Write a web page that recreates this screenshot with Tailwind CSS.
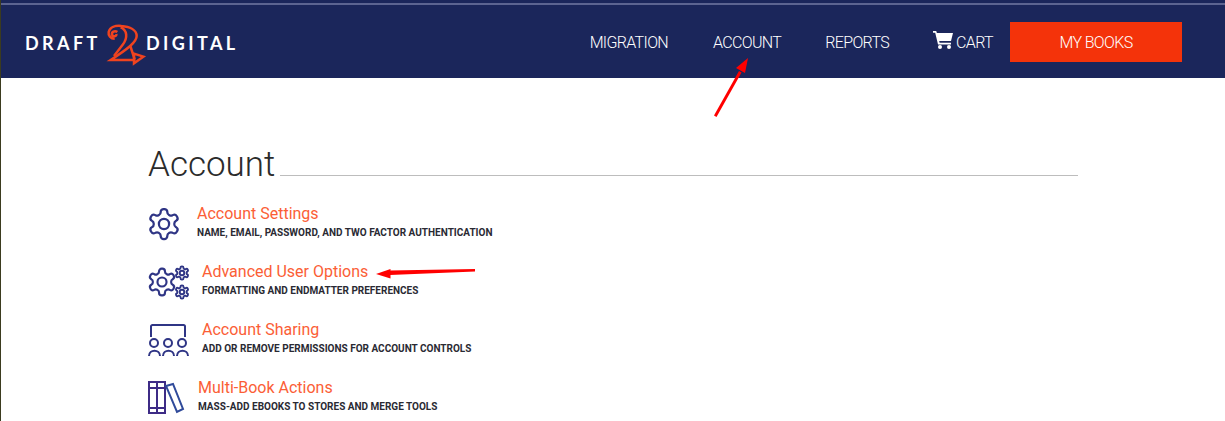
<!DOCTYPE html>
<html lang="en">
  <head>
    <meta charset="utf-8" />
    <meta name="viewport" content="width=device-width, initial-scale=1" />
    <title>Account</title>
    <script src="https://cdn.jsdelivr.net/npm/@tailwindcss/browser@4"></script>
  </head>
  <body class="bg-white font-['Roboto',sans-serif] overflow-hidden">
    <svg class="hidden">
      <symbol id="gear" viewBox="0 0 24 24">
        <path d="M12.22 2h-.44a2 2 0 0 0-2 2v.18a2 2 0 0 1-1 1.73l-.43.25a2 2 0 0 1-2 0l-.15-.08a2 2 0 0 0-2.73.73l-.22.38a2 2 0 0 0 .73 2.73l.15.1a2 2 0 0 1 1 1.72v.51a2 2 0 0 1-1 1.74l-.15.09a2 2 0 0 0-.73 2.73l.22.38a2 2 0 0 0 2.73.73l.15-.08a2 2 0 0 1 2 0l.43.25a2 2 0 0 1 1 1.73V20a2 2 0 0 0 2 2h.44a2 2 0 0 0 2-2v-.18a2 2 0 0 1 1-1.73l.43-.25a2 2 0 0 1 2 0l.15.08a2 2 0 0 0 2.73-.73l.22-.39a2 2 0 0 0-.73-2.73l-.15-.08a2 2 0 0 1-1-1.74v-.5a2 2 0 0 1 1-1.74l.15-.09a2 2 0 0 0 .73-2.73l-.22-.38a2 2 0 0 0-2.73-.73l-.15.08a2 2 0 0 1-2 0l-.43-.25a2 2 0 0 1-1-1.73V4a2 2 0 0 0-2-2z" fill="none" stroke="#2f3585" />
        <circle cx="12" cy="12" r="3.4" fill="none" stroke="#2f3585" />
      </symbol>
    </svg>

    <div class="relative h-[421px] border-l border-[#3b3b1f]">
      <header class="h-[78px] bg-[#1b265b] pt-[3px]">
        <div class="h-[2px] bg-[#5c6491]"></div>
        <div class="flex items-center h-[73px]">
          <div class="flex items-center ml-[24px]">
            <span class="font-['Lato',sans-serif] font-bold text-white text-[18px] tracking-[3.4px] w-[73px] mt-[3px]">DRAFT</span>
            <svg width="56" height="48" viewBox="0 0 168 144" fill="none" stroke="#f0431f" stroke-width="7.5" class="mt-[5px]">
              <path d="M58 36C50 30 40 36 42 44C44 52 56 50 55 42" />
              <path d="M50 56C38 56 30 46 32 36C36 22 52 16 70 18C96 20 116 30 116 48C116 66 90 86 38 120H112" />
              <path d="M68 22C88 30 90 54 74 74L48 108M97 78L110 118" />
              <path d="M108 101L136 110L108 130Z" />
            </svg>
            <span class="font-['Lato',sans-serif] font-bold text-white text-[18px] tracking-[3.4px] -ml-[8px] mt-[3px]">DIGITAL</span>
          </div>
          <nav class="flex items-center ml-auto mr-[43px] text-white text-[16px] tracking-[-0.65px] font-light">
            <a class="mr-[45px] mt-[2px]">MIGRATION</a>
            <a class="mr-[44px] mt-[2px]">ACCOUNT</a>
            <a class="mr-[44px] mt-[2px]">REPORTS</a>
            <a class="flex items-center mr-[17px] mt-[2px]">
              <svg width="20" height="18" viewBox="0 0 20 18" class="mr-[3px] -mt-[6px]" fill="#fff">
                <path d="M0 0h3.200l.7 2H20l-2 8H6.200l.4 1.800H18v1.700H5L2.200 1.700H0z" />
                <circle cx="7" cy="16" r="2" />
                <circle cx="16" cy="16" r="2" />
              </svg>
              CART
            </a>
            <a class="flex items-center justify-center w-[172px] h-[40px] pt-[2px] bg-[#f4330a]">MY BOOKS</a>
          </nav>
        </div>
      </header>

      <main class="pl-[147px] pr-[147px] pt-[62px]">
        <div class="flex items-end h-[46px]">
          <h1 class="text-[35px] leading-[46px] font-light text-[#2b2b2b] mr-[5px] -mb-[2px]">Account</h1>
          <div class="flex-1 h-px bg-[#bdbdbd] mb-[10px]"></div>
        </div>

        <ul class="mt-[13px]">
          <li class="flex h-[58px] items-start">
            <svg width="36" height="36" class="ml-[-2px] mt-[7px] mr-[15px] stroke-[1.5]"><use href="#gear" /></svg>
            <div class="mt-[5px]">
              <a class="block text-[16px] leading-[19px] text-[#fb5e36]">Account Settings</a>
              <p class="text-[10px] leading-[12px] font-bold text-[#2a2a33] mt-[4px]">NAME, EMAIL, PASSWORD, AND TWO FACTOR AUTHENTICATION</p>
            </div>
          </li>
          <li class="flex h-[58px] items-start">
            <div class="relative w-[42px] h-[34px] mt-[8px] mr-[12px] shrink-0">
              <svg width="32" height="32" class="absolute left-[-2px] top-[1px] stroke-[1.6]"><use href="#gear" /></svg>
              <svg width="16" height="16" class="absolute left-[26px] top-0 stroke-[2.8]"><use href="#gear" /></svg>
              <svg width="16" height="16" class="absolute left-[26px] top-[19px] stroke-[2.8]"><use href="#gear" /></svg>
            </div>
            <div class="mt-[5px]">
              <a class="block text-[16px] leading-[19px] text-[#fb5e36]">Advanced User Options</a>
              <p class="text-[10px] leading-[12px] font-bold text-[#2a2a33] mt-[4px]">FORMATTING AND ENDMATTER PREFERENCES</p>
            </div>
          </li>
          <li class="flex h-[58px] items-start">
            <svg width="42" height="34" viewBox="0 0 42 34" class="mt-[9px] mr-[12px] shrink-0" fill="none" stroke="#2f3585" stroke-width="2">
              <path d="M3 13V2.500a1.500 1.500 0 0 1 1.500-1.500H35.500a1.500 1.500 0 0 1 1.500 1.500V13" />
              <circle cx="6" cy="19" r="4" />
              <circle cx="20" cy="19" r="4" />
              <circle cx="34" cy="19" r="4" />
              <path d="M1 32C1 25 12 25 12 32M15 32C15 25 26 25 26 32M29 32C29 25 40 25 40 32" />
            </svg>
            <div class="mt-[5px]">
              <a class="block text-[16px] leading-[19px] text-[#fb5e36]">Account Sharing</a>
              <p class="text-[10px] leading-[12px] font-bold text-[#2a2a33] mt-[4px]">ADD OR REMOVE PERMISSIONS FOR ACCOUNT CONTROLS</p>
            </div>
          </li>
          <li class="flex h-[58px] items-start">
            <svg width="38" height="36" viewBox="0 0 38 36" class="mt-[8px] mr-[12px] shrink-0" fill="none" stroke-width="2">
              <path d="M1 1H17V32H1ZM9 1V32M1 7H17M1 27H17" stroke="#3d2b86" />
              <path d="M18 5L25 3L35 28L29 31Z" stroke="#2f4a9a" />
            </svg>
            <div class="mt-[5px]">
              <a class="block text-[16px] leading-[19px] text-[#fb5e36]">Multi-Book Actions</a>
              <p class="text-[10px] leading-[12px] font-bold text-[#2a2a33] mt-[4px]">MASS-ADD EBOOKS TO STORES AND MERGE TOOLS</p>
            </div>
          </li>
        </ul>
      </main>

      <!-- annotation arrows drawn over the page -->
      <svg class="absolute left-[-1px] top-0 pointer-events-none" width="1225" height="421" fill="#f00" stroke="none">
        <path d="M714 115.500L739 71L741.500 72.500L716.500 117Z" />
        <path d="M748 58L736 68L745 73Z" />
        <path d="M475 269V271.500L390 275V270.500Z" />
        <path d="M376 274L390.500 269V278.500Z" />
      </svg>
    </div>
  </body>
</html>
